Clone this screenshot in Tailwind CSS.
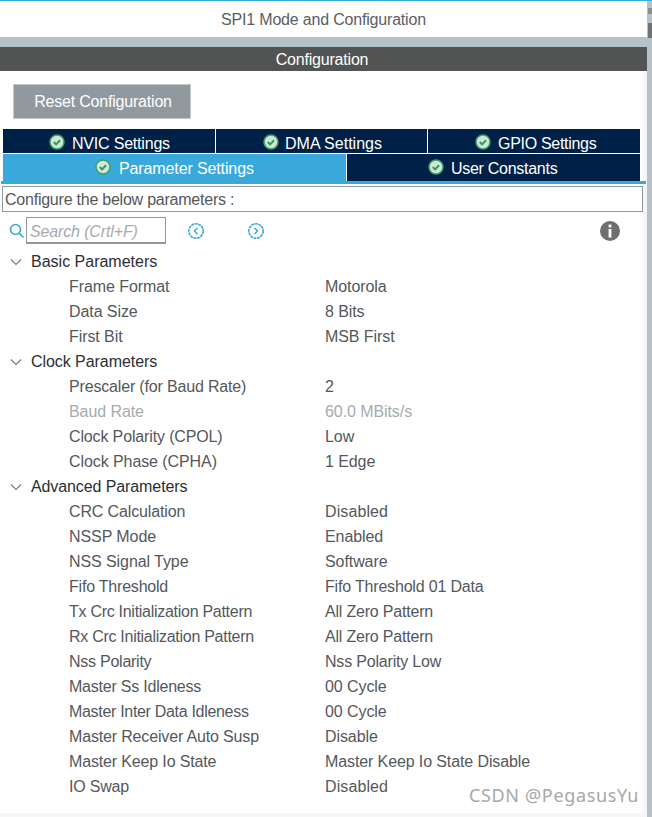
<!DOCTYPE html>
<html lang="en">
<head>
    <meta charset="UTF-8">
    <title>SPI1 Mode and Configuration</title>
    <script src="https://cdn.jsdelivr.net/npm/@tailwindcss/browser@4"></script>
</head>
<body class="bg-[#b6c2c9] font-['Liberation_Sans',Arial,sans-serif] overflow-hidden">
<div class="relative w-[652px] h-[817px] overflow-hidden">

    <!-- Title -->
    <div class="h-[37px] w-[647px] bg-white flex items-center justify-center pt-[3px] text-[16px] tracking-[-0.19px] text-[#5a5f63]">SPI1 Mode and Configuration</div>
    <div class="absolute top-0 left-0 w-full h-px bg-[#39a9dc]"></div>
    <div class="absolute left-[648px] top-[8px] w-[4px] h-[6px] bg-[#8a8f92]"></div>
    <div class="absolute left-[648px] top-[23px] w-[4px] h-[15px] bg-[#6f7376]"></div>
    <div class="h-[10px]"></div>

    <!-- Configuration header -->
    <div class="h-[24px] w-[647px] bg-[#525453] text-white text-[16px] tracking-[-0.2px] flex items-center justify-center pt-[1px] pr-[3px]">Configuration</div>

    <div class="w-[647px] h-[746px] bg-[#f6f6f6]">
    <div class="w-[643px] h-[742px] bg-white">
        <div class="pl-[13px] pt-[13px]">
            <div class="w-[178px] h-[35px] bg-[#92999e] border border-[#c4c9cc] text-white text-[16px] tracking-[-0.2px] flex items-center justify-center pl-[2px]">Reset Configuration</div>
        </div>

        <!-- Tabs -->
        <div class="pl-[3px] pt-[10px]">
            <div class="flex h-[24px] w-[637px] gap-px text-white text-[16px]">
                <div class="w-[212px] bg-[#002147] flex items-center gap-[7px] pl-[46px] pt-[6px] tracking-[-0.2px]">
                    <svg class="-mt-[4px]" width="16" height="16" viewBox="0 0 16 16"><circle cx="8" cy="8" r="7" fill="#cfe8d6" stroke="#3f9e68" stroke-width="1.5"/><path d="M4.8 8l2.3 2.4 4-4.2" fill="none" stroke="#2f9a5c" stroke-width="2"/></svg>
                    <span>NVIC Settings</span>
                </div>
                <div class="w-[211px] bg-[#002147] flex items-center gap-[6px] pl-[47px] pt-[6px]">
                    <svg class="-mt-[4px]" width="16" height="16" viewBox="0 0 16 16"><circle cx="8" cy="8" r="7" fill="#cfe8d6" stroke="#3f9e68" stroke-width="1.5"/><path d="M4.8 8l2.3 2.4 4-4.2" fill="none" stroke="#2f9a5c" stroke-width="2"/></svg>
                    <span>DMA Settings</span>
                </div>
                <div class="flex-1 bg-[#002147] flex items-center gap-[7px] pl-[47px] pt-[6px] tracking-[-0.3px]">
                    <svg class="-mt-[4px]" width="16" height="16" viewBox="0 0 16 16"><circle cx="8" cy="8" r="7" fill="#cfe8d6" stroke="#3f9e68" stroke-width="1.5"/><path d="M4.8 8l2.3 2.4 4-4.2" fill="none" stroke="#2f9a5c" stroke-width="2"/></svg>
                    <span>GPIO Settings</span>
                </div>
            </div>
            <div class="flex h-[27px] w-[637px] mt-px gap-px text-white text-[16px]">
                <div class="w-[343px] bg-[#39a9dc] flex items-center gap-[8px] pl-[92px] pt-[2px] tracking-[-0.12px]">
                    <svg class="-mt-[4px]" width="16" height="16" viewBox="0 0 16 16"><circle cx="8" cy="8" r="7" fill="#cfe8d6" stroke="#3f9e68" stroke-width="1.5"/><path d="M4.8 8l2.3 2.4 4-4.2" fill="none" stroke="#2f9a5c" stroke-width="2"/></svg>
                    <span>Parameter Settings</span>
                </div>
                <div class="flex-1 bg-[#002147] flex items-center gap-[7px] pl-[81px] pt-[2px] tracking-[-0.28px]">
                    <svg class="-mt-[4px]" width="16" height="16" viewBox="0 0 16 16"><circle cx="8" cy="8" r="7" fill="#cfe8d6" stroke="#3f9e68" stroke-width="1.5"/><path d="M4.8 8l2.3 2.4 4-4.2" fill="none" stroke="#2f9a5c" stroke-width="2"/></svg>
                    <span>User Constants</span>
                </div>
            </div>
        </div>
        <div class="relative h-[3px] w-[645px] ml-px bg-[#39a9dc]"></div>

        <div class="ml-[2px] mt-[2px] w-[641px] h-[26px] border border-[#92999e] text-[16px] tracking-[-0.23px] text-[#54585c] pl-[2px] pt-[1px] flex items-center">Configure the below parameters :</div>

        <!-- Search row -->
        <div class="mt-[5px] mb-[5px] h-[27px] flex items-center">
            <svg class="ml-[9px]" width="16" height="16" viewBox="0 0 16 16"><circle cx="6.5" cy="6.5" r="5" fill="none" stroke="#39a9dc" stroke-width="1.6"/><path d="M10 10l4.5 4.5" stroke="#39a9dc" stroke-width="1.6"/></svg>
            <div class="ml-[1px] w-[140px] h-[27px] border border-[#92999e] border-b-2 text-[16px] tracking-[-0.14px] italic text-[#a6abae] pl-[3px] pt-[3px] flex items-center">Search (Crtl+F)</div>
            <svg class="ml-[21px]" width="18" height="18" viewBox="0 0 18 18"><circle cx="9" cy="9" r="7.2" fill="none" stroke="#39a9dc" stroke-width="1.6" stroke-dasharray="3 0.6"/><path d="M10.5 6l-3 3 3 3" fill="none" stroke="#39a9dc" stroke-width="1.5"/></svg>
            <svg class="ml-[42px]" width="18" height="18" viewBox="0 0 18 18"><circle cx="9" cy="9" r="7.2" fill="none" stroke="#39a9dc" stroke-width="1.6" stroke-dasharray="3 0.6"/><path d="M7.5 6l3 3-3 3" fill="none" stroke="#39a9dc" stroke-width="1.5"/></svg>
            <svg class="ml-[335px]" width="20" height="20" viewBox="0 0 20 20"><circle cx="10" cy="10" r="10" fill="#6f6f6f"/><rect x="8.6" y="3.6" width="2.8" height="2.8" fill="#fff"/><rect x="8.6" y="8" width="2.8" height="8.6" fill="#fff"/></svg>
        </div>

        <!-- Parameters -->
        <div class="text-[16px] leading-[25px] text-[#54585c]">
            <div class="h-[25px] flex items-center text-[#2b2f33]">
                <svg class="ml-[10px] mr-[9px]" width="12" height="8" viewBox="0 0 12 8"><path d="M1 1.5l5 5 5-5" fill="none" stroke="#7d7d7d" stroke-width="1.2"/></svg>
                <span>Basic Parameters</span>
            </div>
            <div class="grid pl-[69px] grid-cols-[256px_1fr] tracking-[-0.08px]">
                <span>Frame Format</span><span>Motorola</span>
                <span>Data Size</span><span>8 Bits</span>
                <span>First Bit</span><span>MSB First</span>
            </div>
            <div class="h-[25px] flex items-center text-[#2b2f33]">
                <svg class="ml-[10px] mr-[9px]" width="12" height="8" viewBox="0 0 12 8"><path d="M1 1.5l5 5 5-5" fill="none" stroke="#7d7d7d" stroke-width="1.2"/></svg>
                <span class="tracking-[-0.06px]">Clock Parameters</span>
            </div>
            <div class="grid pl-[69px] grid-cols-[256px_1fr] tracking-[-0.08px]">
                <span class="tracking-[-0.17px]">Prescaler (for Baud Rate)</span><span>2</span>
                <span class="text-[#a6abae]">Baud Rate</span><span class="text-[#a6abae]">60.0 MBits/s</span>
                <span class="tracking-[-0.14px]">Clock Polarity (CPOL)</span><span>Low</span>
                <span>Clock Phase (CPHA)</span><span>1 Edge</span>
            </div>
            <div class="h-[25px] flex items-center text-[#2b2f33]">
                <svg class="ml-[10px] mr-[9px]" width="12" height="8" viewBox="0 0 12 8"><path d="M1 1.5l5 5 5-5" fill="none" stroke="#7d7d7d" stroke-width="1.2"/></svg>
                <span class="tracking-[-0.1px]">Advanced Parameters</span>
            </div>
            <div class="grid pl-[69px] grid-cols-[256px_1fr] tracking-[-0.08px]">
                <span class="tracking-[-0.13px]">CRC Calculation</span><span class="tracking-[0.1px]">Disabled</span>
                <span>NSSP Mode</span><span>Enabled</span>
                <span>NSS Signal Type</span><span>Software</span>
                <span class="tracking-[-0.21px]">Fifo Threshold</span><span class="tracking-[-0.18px]">Fifo Threshold 01 Data</span>
                <span class="tracking-[-0.28px]">Tx Crc Initialization Pattern</span><span class="tracking-[-0.2px]">All Zero Pattern</span>
                <span class="tracking-[-0.28px]">Rx Crc Initialization Pattern</span><span class="tracking-[-0.2px]">All Zero Pattern</span>
                <span class="tracking-[-0.25px]">Nss Polarity</span><span class="tracking-[-0.19px]">Nss Polarity Low</span>
                <span class="tracking-[-0.22px]">Master Ss Idleness</span><span>00 Cycle</span>
                <span class="tracking-[-0.31px]">Master Inter Data Idleness</span><span>00 Cycle</span>
                <span class="tracking-[-0.16px]">Master Receiver Auto Susp</span><span>Disable</span>
                <span class="tracking-[-0.15px]">Master Keep Io State</span><span class="tracking-[-0.11px]">Master Keep Io State Disable</span>
                <span class="tracking-[-0.2px]">IO Swap</span><span class="tracking-[0.1px]">Disabled</span>
            </div>
        </div>
    </div>
    </div>

    <!-- CSDN watermark -->
    <div class="absolute left-[469px] top-[782px] text-[18px] tracking-[0.65px] text-[#a8a8a8] font-['Noto_Sans',sans-serif]">CSDN @PegasusYu</div>
</div>
</body>
</html>
